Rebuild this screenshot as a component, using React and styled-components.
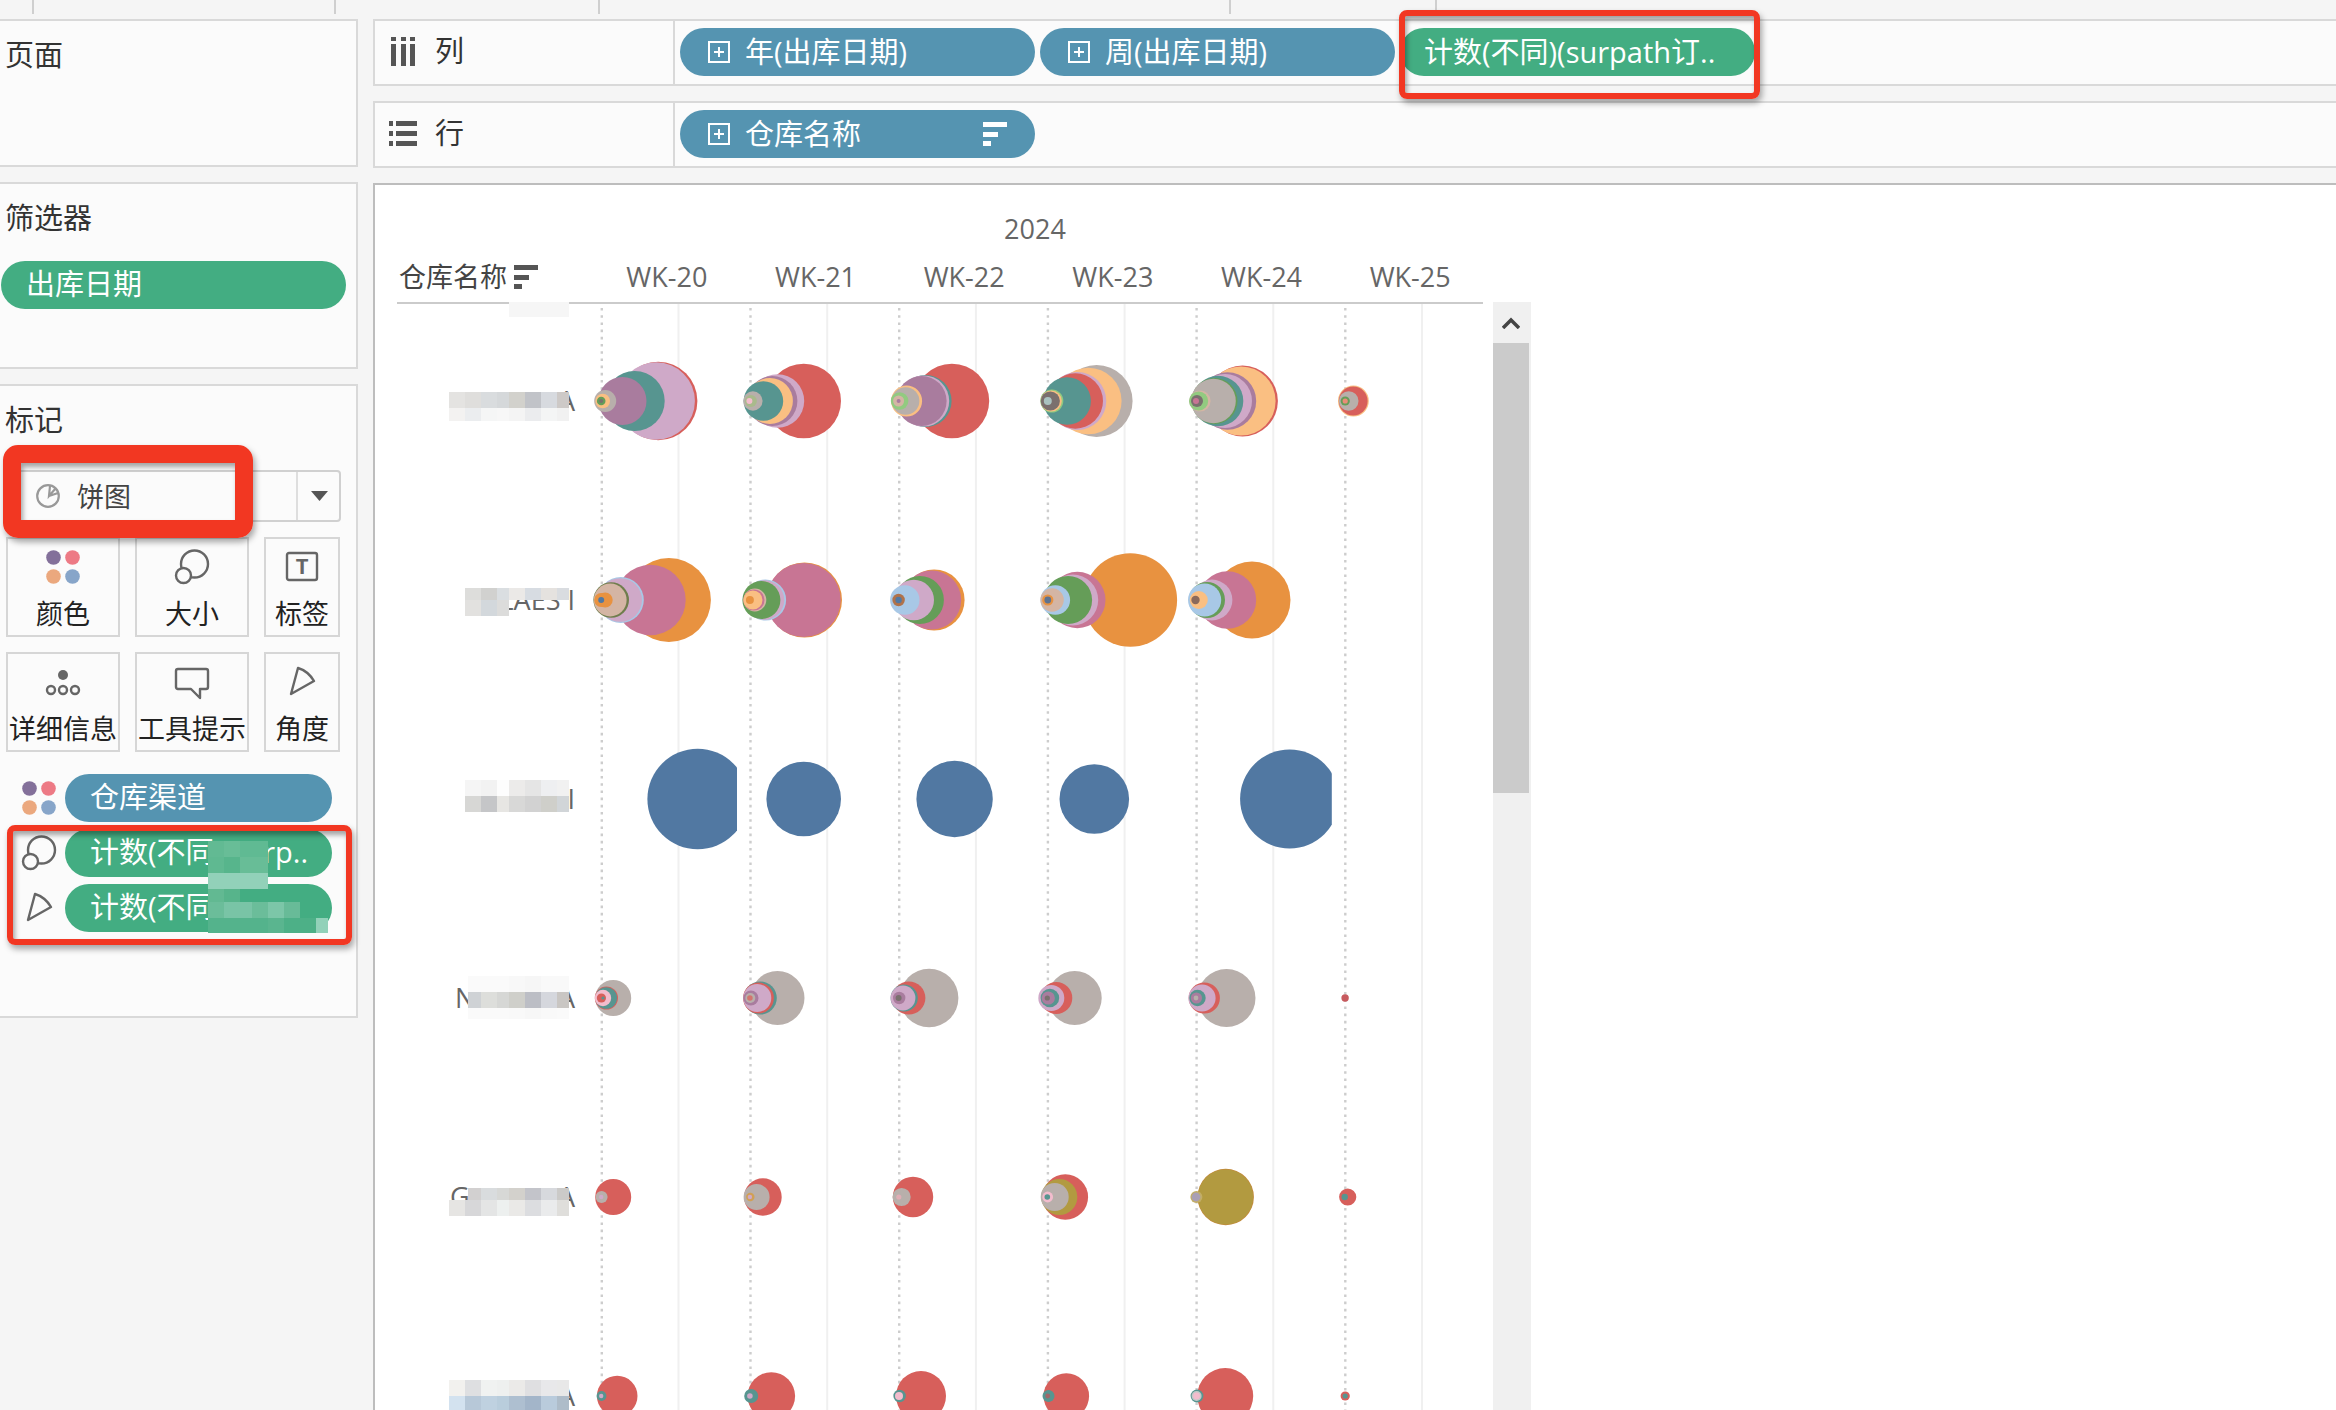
import React from "react";
import styled, { createGlobalStyle } from "styled-components";

const C = {
  red: "#d75f5b",
  lilac: "#cfa9c8",
  teal: "#579590",
  purple: "#a97c9e",
  gray: "#b8afab",
  peach: "#fabf82",
  orange: "#e89240",
  mauve: "#c87594",
  green: "#659d58",
  sky: "#a8c8e6",
  tan: "#d4b5a4",
  blue: "#5178a2",
  gold: "#b29a40",
  lime: "#92ca80",
  dark: "#7a706e",
  pink: "#f3bccd",
};

const GlobalStyle = createGlobalStyle`
  *, *::before, *::after { box-sizing: border-box; }
  body {
    margin: 0;
    background: #f5f5f5;
    color: #333;
    font-family: "Open Sans", "Noto Sans CJK SC", sans-serif;
    font-size: 29px;
    line-height: 40px;
  }
  button, select { font-family: inherit; color: inherit; }
`;

const Page = styled.div`
  height: 100vh;
  overflow: hidden;
  display: flex;
  flex-direction: column;
`;

const TopStrip = styled.div`
  height: 14px;
  margin-bottom: 5px;
  display: flex;
  flex: none;
`;

const Segment = styled.div`
  width: ${(p) => p.$width}px;
  border-right: 2px solid #cfcfcf;
`;

const Workspace = styled.div`
  flex: 1;
  min-height: 0;
  display: grid;
  grid-template-columns: 358px minmax(0, 1fr);
  gap: 15px;
`;

const Sidebar = styled.aside`
  display: flex;
  flex-direction: column;
  gap: 15px;
`;

const Card = styled.section`
  height: ${(p) => p.$height}px;
  background: #fbfbfb;
  border: 2px solid #d9d9d9;
  border-left: 0;
  padding: 14px 10px 0 0;
`;

const CardTitle = styled.h2`
  margin: 0 0 0 5px;
  font-size: 29px;
  line-height: 40px;
  font-weight: 400;
`;

const Pill = styled.button`
  position: relative;
  display: flex;
  align-items: center;
  gap: 15px;
  flex: none;
  width: ${(p) => p.$width}px;
  height: 48px;
  padding: 0 25px 2px;
  border: 0;
  border-radius: 24px;
  background: ${(p) => (p.$measure ? "#43ad82" : "#5594b1")};
  color: #fff;
  font-size: 29px;
  line-height: 40px;
  white-space: nowrap;
  text-align: left;
`;

const PillText = styled.span`
  flex: 1;
`;

const FilterPill = styled(Pill)`
  margin: 23px 0 0 1px;
`;

const ShelfPill = styled(Pill)`
  padding: 0 ${(p) => (p.$measure ? 24 : 28)}px;
`;

const Highlight = styled.span`
  position: absolute;
  z-index: 2;
  inset: ${(p) => p.$inset};
  border: ${(p) => p.$thick}px solid #f23722;
  border-radius: ${(p) => p.$radius}px;
  box-shadow: 2px 4px 6px rgba(0, 0, 0, 0.35), inset 2px 4px 5px rgba(0, 0, 0, 0.35);
  pointer-events: none;
`;

const MarkType = styled.div`
  position: relative;
  display: flex;
  align-items: center;
  width: 336px;
  height: 52px;
  margin: 30px 0 15px 5px;
`;

const MarkSelect = styled.select`
  appearance: none;
  width: 100%;
  height: 52px;
  padding: 0 60px 0 70px;
  border: 2px solid #d0d0d0;
  border-radius: 4px;
  background: #fbfbfb;
  color: #444;
  font-size: 27px;
`;

const TypeIcon = styled.svg`
  position: absolute;
  left: 30px;
  top: 13px;
`;

const ArrowBox = styled.span`
  position: absolute;
  right: 0;
  top: 2px;
  width: 45px;
  height: 48px;
  display: flex;
  align-items: center;
  justify-content: center;
  border-left: 2px solid #dedede;
  pointer-events: none;
`;

const ButtonGrid = styled.div`
  display: grid;
  grid-template-columns: 114px 114px 76px;
  gap: 15px;
  margin-left: 6px;
`;

const MarkButton = styled.button`
  height: 100px;
  padding: 9px 0 0;
  border: 2px solid #d6d6d6;
  background: #fbfbfb;
  display: flex;
  flex-direction: column;
  align-items: center;
  gap: 8px;
  color: #222;
  font-size: 27px;
  line-height: 40px;
  white-space: nowrap;
`;

const EncodingList = styled.div`
  position: relative;
  display: grid;
  gap: 7px;
  margin-top: 22px;
`;

const Encoding = styled.div`
  display: grid;
  grid-template-columns: 38px 267px;
  gap: 7px;
  padding-left: 20px;
  align-items: center;
`;

const ListMosaic = styled.svg`
  position: absolute;
  left: 208px;
  top: 67px;
`;

const Main = styled.main`
  display: flex;
  flex-direction: column;
  gap: 15px;
  min-width: 0;
  min-height: 0;
`;

const Shelf = styled.section`
  display: flex;
  flex: none;
  height: 67px;
  background: #fbfbfb;
  border: 2px solid #d9d9d9;
  border-right: 0;
`;

const ShelfLabel = styled.h2`
  display: flex;
  align-items: center;
  gap: 18px;
  width: 300px;
  margin: 0;
  padding: 0 0 3px 14px;
  border-right: 2px solid #d9d9d9;
  font-size: 29px;
  line-height: 40px;
  font-weight: 400;
`;

const ShelfItems = styled.div`
  display: flex;
  gap: 5px;
  padding: 7px 5px;
`;

const View = styled.section`
  flex: 1;
  min-height: 0;
  display: flex;
  flex-direction: column;
  overflow: hidden;
  background: #fff;
  border: solid #bdbdbd;
  border-width: 2px 0 0 2px;
  padding: 24px 0 0 22px;
  color: #666;
  font-size: 27px;
`;

const ColumnHeads = styled.div`
  display: grid;
  grid-template-columns: 194px repeat(6, 1fr);
  grid-template-rows: 40px 40px;
  row-gap: 8px;
  width: 1086px;
  height: 93px;
  flex: none;
  text-align: center;
`;

const YearHead = styled.div`
  grid-column: 2 / -1;
  padding-right: 4px;
`;

const WeekHead = styled.div`
  padding-left: 3px;
`;

const FieldHead = styled.div`
  display: flex;
  align-items: center;
  gap: 7px;
  padding-left: 2px;
  color: #444;
  white-space: nowrap;
`;

const Body = styled.div`
  flex: 1;
  min-height: 0;
  display: flex;
  gap: 10px;
  overflow: hidden;
`;

const Pane = styled.div`
  position: relative;
  display: grid;
  grid-template-columns: 194px 892px;
  align-items: start;
  border-top: 2px solid #cbcbcb;
`;

const RowLabel = styled.div`
  display: flex;
  align-items: center;
  justify-content: flex-end;
  height: 199px;
  padding: 0 16px 6px 0;
  line-height: 24px;
`;

const LabelText = styled.span`
  display: flex;
  justify-content: space-between;
  width: ${(p) => p.$width}px;
  white-space: nowrap;
`;

const LabelMosaic = styled.svg`
  position: absolute;
  left: 52px;
  top: -3px;
`;

const Scroll = styled.div`
  width: 38px;
  background: #f0f0f0;
`;

const ScrollUp = styled.button`
  display: flex;
  align-items: center;
  justify-content: center;
  width: 36px;
  height: 41px;
  padding: 0;
  border: 0;
  background: #f0f0f0;
`;

const Thumb = styled.div`
  width: 36px;
  height: 450px;
  background: #cbcbcb;
`;

const PlusIcon = () => (
  <svg width="22" height="22" viewBox="0 0 22 22" fill="none" stroke="#fff" strokeWidth="2">
    <rect x="1" y="1" width="20" height="20" />
    <path d="M11 6v10M6 11h10" />
  </svg>
);

const SortIcon = ({ color = "#555" }) => (
  <svg width="24" height="24" viewBox="0 0 24 24" fill={color}>
    <rect width="24" height="5" />
    <rect y="10" width="15" height="5" />
    <rect y="19" width="8" height="5" />
  </svg>
);

const ColumnsIcon = () => (
  <svg width="28" height="29" viewBox="0 0 28 29" fill="#555">
    {[2, 12, 21].map((x) => (
      <g key={x}>
        <rect x={x} width="5" height="4" />
        <rect x={x} y="7" width="5" height="22" />
      </g>
    ))}
  </svg>
);

const RowsIcon = () => (
  <svg width="28" height="25" viewBox="0 0 28 25" fill="#555">
    {[0, 10, 20].map((y) => (
      <g key={y}>
        <rect y={y} width="4" height="5" />
        <rect x="7" y={y} width="21" height="5" />
      </g>
    ))}
  </svg>
);

const IconFrame = ({ children }) => (
  <svg width="38" height="38" viewBox="0 0 38 38" fill="none" stroke="#666" strokeWidth="2.4" strokeLinejoin="round">
    {children}
  </svg>
);

const ColorIcon = () => (
  <IconFrame>
    <g stroke="none">
      <circle cx="9.5" cy="9.5" r="7.3" fill="#83709a" />
      <circle cx="28.5" cy="9.5" r="7.3" fill="#ed7a85" />
      <circle cx="9.5" cy="28.5" r="7.3" fill="#eba87e" />
      <circle cx="28.5" cy="28.5" r="7.3" fill="#87a5c9" />
    </g>
  </IconFrame>
);

const SizeIcon = () => (
  <IconFrame>
    <circle cx="21.5" cy="16" r="13.5" />
    <circle cx="10.5" cy="27.5" r="7.5" fill="#fbfbfb" />
  </IconFrame>
);

const LabelIcon = () => (
  <IconFrame>
    <rect x="4" y="5" width="30" height="27" rx="2" />
    <text
      x="19"
      y="26"
      textAnchor="middle"
      fontFamily="Liberation Mono, monospace"
      fontWeight="700"
      fontSize="22"
      fill="#666"
      stroke="none"
    >
      T
    </text>
  </IconFrame>
);

const DetailIcon = () => (
  <IconFrame>
    <circle cx="19" cy="12" r="5" fill="#666" stroke="none" />
    <circle cx="7" cy="27" r="4" />
    <circle cx="19" cy="27" r="4" />
    <circle cx="31" cy="27" r="4" />
  </IconFrame>
);

const TooltipIcon = () => (
  <IconFrame>
    <path d="M5 6h28q2 0 2 2v16q0 2-2 2h-6v9l-9-9H5q-2 0-2-2V8q0-2 2-2z" />
  </IconFrame>
);

const AngleIcon = () => (
  <IconFrame>
    <path d="M15 5Q25 8 31 18L8 31Z" />
  </IconFrame>
);

const PieIcon = () => (
  <TypeIcon width="26" height="26" viewBox="0 0 26 26" fill="none" stroke="#999" strokeWidth="2.2">
    <circle cx="13" cy="13" r="10.8" />
    <path d="M15 3L14 13L21 5M14 13L23 10" />
  </TypeIcon>
);

const markButtons = [
  ["颜色", ColorIcon],
  ["大小", SizeIcon],
  ["标签", LabelIcon],
  ["详细信息", DetailIcon],
  ["工具提示", TooltipIcon],
  ["角度", AngleIcon],
];

// Each mark is [offset from the zero line, radius, colour], largest first.
const marks = [
  [
    [[56, 39.2, C.red], [54, 38.7, C.lilac], [32.5, 30, C.teal], [20.3, 24, C.purple], [3, 11, C.gray], [0.5, 7.3, C.peach], [-1, 4.3, C.green], [-1, 2, C.dark]],
    [[52.8, 37.3, C.red], [26.6, 26.7, C.lilac], [21.5, 25, C.purple], [19, 23, C.peach], [12.5, 19.8, C.teal], [2, 9.7, C.gray], [0, 6, "#a9ba8c"], [-1.5, 3, C.pink]],
    [[52.3, 37.3, C.red], [26, 26, C.teal], [24, 25.6, C.lilac], [22, 25, C.purple], [7, 15.5, C.peach], [6, 13.8, C.gray], [0, 8.8, C.lime], [-1, 5.5, C.tan], [-1, 2, C.purple]],
    [[48.3, 36, C.gray], [40, 33.3, C.peach], [29, 29, C.lilac], [27, 27.7, C.red], [18.8, 23.8, C.teal], [3.5, 11.5, C.lime], [3, 10.5, C.peach], [2, 9.6, C.dark], [-0.5, 4, "#a9c3c0"]],
    [[45.5, 35.4, C.red], [44, 34.6, C.peach], [30.5, 28.7, C.purple], [28, 27, C.lilac], [21, 25.3, C.teal], [17.5, 23, C.green], [16.5, 22.3, C.gray], [3, 10.6, C.tan], [1.6, 9.6, C.lime], [0, 6, C.dark], [-1, 3, C.mauve]],
    [[7.7, 15.4, C.peach], [7.5, 14.4, C.red], [3, 9.8, C.gray], [-0.5, 4.6, C.green], [-0.5, 2.6, "#e98d78"]],
  ],
  [
    [[66.7, 42, C.orange], [48.3, 35.2, C.mauve], [18.6, 23, C.sky], [18, 21.8, C.lilac], [9, 17.8, "#6f7d4c"], [8, 16.4, C.tan], [3, 7.5, C.orange], [-1, 7, C.orange], [-1, 3, C.blue]],
    [[53.6, 37.5, C.orange], [52.7, 37.1, C.mauve], [14.6, 20.6, C.sky], [13.6, 19.8, C.lilac], [10.5, 19, C.green], [4, 11.4, C.tan], [3, 10.6, C.mauve], [2, 9.6, C.peach], [-1, 4, C.orange]],
    [[34.5, 30.5, C.orange], [32, 29.6, C.mauve], [20.3, 24, C.green], [14.2, 20.2, C.lilac], [5.2, 14.7, C.sky], [-1, 6.2, "#b0724a"], [-1, 3.2, C.blue]],
    [[82, 46.8, C.orange], [29, 28.2, C.mauve], [24.5, 25.4, C.lilac], [19.8, 24, C.green], [7, 14.8, C.sky], [3.8, 11.7, C.tan], [-0.5, 5.6, C.orange], [-0.5, 3.4, "#5f7390"]],
    [[55, 38.5, C.orange], [30.4, 28.8, C.mauve], [15, 20.4, C.lilac], [10, 18, C.green], [7.6, 16.6, C.sky], [1.8, 9, C.peach], [-1.5, 4.2, "#8b6a5c"]],
    [],
  ],
  [
    [[95.5, 50.3, C.blue]],
    [[52.8, 37.3, C.blue]],
    [[55, 38.2, C.blue]],
    [[46, 34.8, C.blue]],
    [[92.6, 49.5, C.blue]],
    [],
  ],
  [
    [[11, 18, C.gray], [4.2, 11.6, C.red], [4, 10.8, C.teal], [0.8, 8.2, C.pink], [-0.8, 4.6, C.red], [0.8, 1.6, C.teal]],
    [[26.6, 27, C.gray], [9.3, 16.6, C.teal], [7.6, 15.4, C.red], [6.4, 14, C.lilac], [0, 7.6, C.purple], [-0.6, 5, C.gray], [-1, 2.8, "#d3756f"]],
    [[29.5, 29.3, C.gray], [9.2, 16.6, C.red], [4.6, 13.6, C.teal], [3.4, 12.4, C.lilac], [-0.4, 6.2, C.purple], [-1, 3, C.dark]],
    [[26.4, 27, C.gray], [8, 16, C.red], [3, 13, C.lilac], [1.6, 9.3, C.teal], [0, 6.6, C.purple], [-1, 2.6, C.dark]],
    [[29.5, 29, C.gray], [7.3, 15.6, C.red], [5, 13.6, C.lilac], [0.5, 8.2, C.teal], [-0.6, 5.6, C.purple], [-1, 2.4, C.gray]],
    [[-0.6, 3.7, "#c75a5e"]],
  ],
  [
    [[11, 18, C.red], [-0.6, 6, C.gray], [-1, 2.2, C.lilac]],
    [[12, 18.8, C.red], [5.7, 13, C.gray], [-0.6, 4.2, "#d1a055"], [-1, 2.2, C.lilac]],
    [[13.4, 20.2, C.red], [2, 9.1, C.gray], [-0.8, 2.6, "#e0adb5"]],
    [[17, 22.8, C.red], [11, 18, C.gold], [6.4, 14, C.gray], [-0.6, 5.4, C.pink], [-1, 2.8, C.teal]],
    [[28.7, 28.2, "#c4893b"], [28.6, 27.6, C.gold], [-0.6, 6, "#c2ad66"], [-1, 4.4, "#a99fb5"]],
    [[2, 8.6, C.red], [-1, 3.2, C.teal]],
  ],
  [
    [[15, 20.3, C.red], [-0.7, 4.9, C.teal], [-1, 2.2, C.lilac]],
    [[20.4, 23.8, C.red], [0.3, 7, C.teal], [-1, 2.8, C.lilac]],
    [[21.4, 25, C.red], [0, 6.2, C.teal], [-0.6, 4, C.pink]],
    [[18, 22.8, C.red], [0.2, 6, C.teal], [-0.6, 2.4, "#a1686a"]],
    [[28.2, 28, C.red], [0, 6.4, C.teal], [-0.4, 5, "#c5c9c8"], [-0.4, 3.4, C.pink]],
    [[-0.5, 4.6, C.red], [-0.5, 2.6, C.teal]],
  ],
];

const PITCH = 148.7;
const ROW = 199;

function Plot() {
  return (
    <svg width="892" height="1194" viewBox="0 0 892 1194">
      <defs>
        {marks[0].map((_, c) => (
          <clipPath id={`cell${c}`} key={c}>
            <rect x={c * PITCH} y="0" width="146" height="1194" />
          </clipPath>
        ))}
      </defs>
      {marks[0].map((_, c) => (
        <g key={c}>
          <line x1={87.5 + c * PITCH} x2={87.5 + c * PITCH} y1="0" y2="1194" stroke="#f0f0f0" strokeWidth="2" />
          <line
            x1={10.8 + c * PITCH}
            x2={10.8 + c * PITCH}
            y1="4"
            y2="1194"
            stroke="#cdcdcd"
            strokeWidth="2.4"
            strokeDasharray="2.6 4.6"
          />
        </g>
      ))}
      {marks.map((row, r) =>
        row.map((cell, c) => (
          <g key={`${r}-${c}`} clipPath={`url(#cell${c})`}>
            {cell.map(([dx, radius, fill], i) => (
              <circle key={i} cx={11.2 + c * PITCH + dx} cy={97 + r * ROW} r={radius} fill={fill} />
            ))}
          </g>
        ))
      )}
    </svg>
  );
}

const edges = [0, 16, 32, 48, 60, 76, 92, 108, 120];

// A strip of shaded blocks: y, height, first block, one shade per block, and where the strip starts.
const strips = [
  [0, 16, 4, ["#f6f6f6", "#f6f6f6", "#f6f6f6", "#f6f6f6"]],
  [91, 16, 0, ["#e4e3e1", "#dfdedc", "#d9dcde", "#d5d8da", "#d2d1cc", "#c1c3c8", "#d7dadf", "#cdc9c7"]],
  [107, 13, 0, ["#f3f2f1", "#ebedef", "#f5f6f6", "#f7f7f7", "#f4f4f4", "#ebecee", "#f4f5f5", "#f1f1f1"]],
  [287, 12, 1, ["#dddddb", "#d1d1cf", "#dadee1", "#ebe9e7", "#d7dce2", "#e5e2df", "#d9dce0"]],
  [299, 16, 1, ["#e2e1df", "#d3d8dc", "#dcdcdb"]],
  [479, 16, 1, ["#f5f5f5", "#f2f2f2", "#fdfdfd", "#ecebea", "#e5e5e5", "#eeeff1", "#f1f1f1"]],
  [495, 16, 1, ["#d7d7d5", "#c5c6c8", "#e7e6e3", "#d8d8d7", "#d2d2d2", "#cfcfca", "#d1d5d8"]],
  [675, 16, 1, ["#fafafa", "#fafafa", "#fafafa", "#f8f8f8", "#f6f6f6", "#f9f9f9", "#f9f9f9"], 19],
  [691, 16, 1, ["#cfd2d5", "#dddedb", "#d6d7d5", "#cfcfca", "#bcbec5", "#d5d7dd", "#c9c6c3"], 19],
  [707, 11, 1, ["#fafafa", "#fafafa", "#fafafa", "#f9f9f9", "#f7f7f7", "#f9f9f9", "#fafafa"], 19],
  [887, 12, 1, ["#d2d0d0", "#d9dcde", "#d7d8d6", "#d3d1cc", "#c3c4ca", "#d7d9dd", "#cbcac8"], 19],
  [899, 16, 0, ["#e6e5e3", "#d7d7d9", "#e4e5e5", "#edf0ef", "#eae9e7", "#dcdde0", "#eaebec", "#dfdedb"]],
  [1079, 16, 0, ["#f2f1ee", "#dedfe1", "#f0f2f1", "#eef0ef", "#ebeae8", "#dfdfe1", "#e8e8ea", "#e8e8e8"]],
  [1095, 16, 0, ["#d3e2ef", "#b7c8d8", "#bfd1e0", "#b9cddc", "#aebfd0", "#a3b5c9", "#b9cbdc", "#aebcc9"]],
];

const rowLabels = [
  ["", "A", 125],
  ["", "LAES I", 80],
  ["", "I", 80],
  ["N", "A", 120],
  ["G", "A", 125],
  ["", "A", 125],
];

const pillBlocks = [
  [0, 0, 16, 16, "#62ba93"], [16, 0, 16, 16, "#68bd97"], [32, 0, 28, 16, "#60ba93"],
  [0, 16, 16, 16, "#5fb991"], [16, 16, 16, 16, "#57b58c"], [32, 16, 28, 16, "#68bd97"],
  [0, 32, 60, 16, "#92d1b9"],
  [0, 48, 16, 13, "#62b992"], [16, 48, 16, 13, "#57b48b"],
  [0, 61, 16, 16, "#6bbd9a"], [16, 61, 28, 16, "#79c4a6"], [44, 61, 16, 16, "#6bbd9a"],
  [60, 61, 16, 16, "#7cc6a8"], [76, 61, 16, 16, "#68bb98"],
  [0, 77, 60, 15, "#54b38c"], [60, 77, 16, 15, "#5ab58f"], [76, 77, 32, 15, "#4db087"],
  [108, 77, 12, 15, "#92d1b9"],
];

export default function App() {
  return (
    <Page>
      <GlobalStyle />
      <TopStrip>
        {[34, 302, 264, 631, 206].map((w, i) => (
          <Segment key={i} $width={w} />
        ))}
      </TopStrip>
      <Workspace>
        <Sidebar>
          <Card $height={148}>
            <CardTitle>页面</CardTitle>
          </Card>
          <Card $height={187}>
            <CardTitle>筛选器</CardTitle>
            <FilterPill $measure $width={345}>出库日期</FilterPill>
          </Card>
          <Card $height={634}>
            <CardTitle>标记</CardTitle>
            <MarkType>
              <MarkSelect aria-label="标记类型" defaultValue="饼图">
                <option>饼图</option>
              </MarkSelect>
              <PieIcon />
              <ArrowBox>
                <svg width="17" height="10" viewBox="0 0 17 10" fill="#555">
                  <path d="M0 0h17L8.5 10z" />
                </svg>
              </ArrowBox>
              <Highlight $inset="-25px 88px -16px -2px" $thick={18} $radius={15} />
            </MarkType>
            <ButtonGrid>
              {markButtons.map(([label, Icon]) => (
                <MarkButton key={label}>
                  <Icon />
                  {label}
                </MarkButton>
              ))}
            </ButtonGrid>
            <EncodingList>
              <Encoding>
                <ColorIcon />
                <Pill $width={267}>仓库渠道</Pill>
              </Encoding>
              <Encoding>
                <SizeIcon />
                <Pill $measure $width={267}>计数(不同)(surp..</Pill>
              </Encoding>
              <Encoding>
                <AngleIcon />
                <Pill $measure $width={267}>计数(不同)</Pill>
              </Encoding>
              <ListMosaic width="120" height="92" viewBox="0 0 120 92" shapeRendering="crispEdges">
                {pillBlocks.map(([x, y, w, h, fill], i) => (
                  <rect key={i} x={x} y={y} width={w} height={h} fill={fill} />
                ))}
              </ListMosaic>
              <Highlight $inset="51px -6px -13px 7px" $thick={6} $radius={8} />
            </EncodingList>
          </Card>
        </Sidebar>
        <Main>
          <Shelf>
            <ShelfLabel>
              <ColumnsIcon />列
            </ShelfLabel>
            <ShelfItems>
              <ShelfPill $width={355}>
                <PlusIcon />
                <PillText>年(出库日期)</PillText>
              </ShelfPill>
              <ShelfPill $width={355}>
                <PlusIcon />
                <PillText>周(出库日期)</PillText>
              </ShelfPill>
              <ShelfPill $measure $width={355}>
                <PillText>计数(不同)(surpath订..</PillText>
                <Highlight $inset="-18px -5px -23px -1px" $thick={6} $radius={8} />
              </ShelfPill>
            </ShelfItems>
          </Shelf>
          <Shelf>
            <ShelfLabel>
              <RowsIcon />行
            </ShelfLabel>
            <ShelfItems>
              <ShelfPill $width={355}>
                <PlusIcon />
                <PillText>仓库名称</PillText>
                <SortIcon color="#fff" />
              </ShelfPill>
            </ShelfItems>
          </Shelf>
          <View>
            <ColumnHeads>
              <span />
              <YearHead>2024</YearHead>
              <FieldHead>
                仓库名称
                <SortIcon />
              </FieldHead>
              {[20, 21, 22, 23, 24, 25].map((week) => (
                <WeekHead key={week}>WK-{week}</WeekHead>
              ))}
            </ColumnHeads>
            <Body>
              <Pane>
                <div>
                  {rowLabels.map(([first, last, width], i) => (
                    <RowLabel key={i}>
                      <LabelText $width={width}>
                        <span>{first}</span>
                        <span>{last}</span>
                      </LabelText>
                    </RowLabel>
                  ))}
                </div>
                <Plot />
                <LabelMosaic width="120" height="1111" viewBox="0 0 120 1111" shapeRendering="crispEdges">
                  {strips.map(([y, h, first, shades, start = 0]) =>
                    shades.map((fill, i) => {
                      const x = Math.max(start, edges[first + i]);
                      return <rect key={`${y}-${i}`} x={x} y={y} width={edges[first + i + 1] - x} height={h} fill={fill} />;
                    })
                  )}
                </LabelMosaic>
              </Pane>
              <Scroll>
                <ScrollUp aria-label="向上滚动">
                  <svg width="18" height="12" viewBox="0 0 18 12" fill="none" stroke="#444" strokeWidth="3.5">
                    <path d="M1 11L9 3l8 8" />
                  </svg>
                </ScrollUp>
                <Thumb />
              </Scroll>
            </Body>
          </View>
        </Main>
      </Workspace>
    </Page>
  );
}
